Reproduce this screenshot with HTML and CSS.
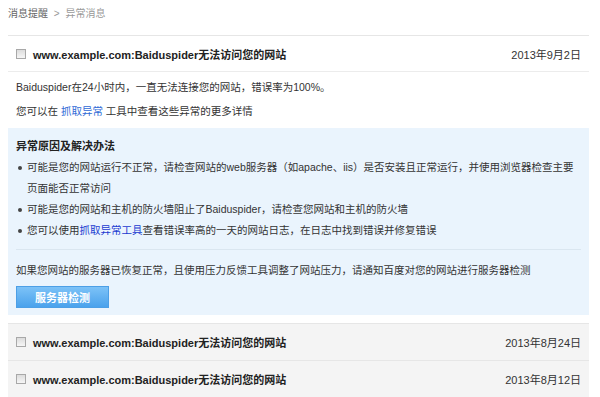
FILE: index.html
```html
<!DOCTYPE html>
<html lang="zh-CN">

<head>
    <meta charset="UTF-8">
    <title>异常消息</title>
    <link rel="stylesheet" href="styles.css">
</head>

<body>
    <div class="page">
        <div class="crumbs">
            <span class="crumb-parent">消息提醒</span>
            <span class="crumb-sep">&gt;</span>
            <span class="crumb-current">异常消息</span>
        </div>

        <!-- 展开的消息 -->
        <div class="msg msg-open">
            <div class="msg-head">
                <span class="check"></span>
                <span class="msg-title">www.example.com:Baiduspider无法访问您的网站</span>
                <span class="msg-date">2013年9月2日</span>
            </div>
            <div class="msg-body">
                <p>Baiduspider在24小时内，一直无法连接您的网站，错误率为100%。</p>
                <p>您可以在 <a href="#" class="link">抓取异常</a> 工具中查看这些异常的更多详情</p>
            </div>
            <div class="solution">
                <h3 class="solution-title">异常原因及解决办法</h3>
                <ul class="solution-list">
                    <li>可能是您的网站运行不正常，请检查网站的web服务器（如apache、iis）是否安装且正常运行，并使用浏览器检查主要页面能否正常访问</li>
                    <li>可能是您的网站和主机的防火墙阻止了Baiduspider，请检查您网站和主机的防火墙</li>
                    <li>您可以使用<a href="#" class="link-dark">抓取异常工具</a>查看错误率高的一天的网站日志，在日志中找到错误并修复错误</li>
                </ul>
                <p class="solution-note">如果您网站的服务器已恢复正常，且使用压力反馈工具调整了网站压力，请通知百度对您的网站进行服务器检测</p>
                <button class="check-btn">服务器检测</button>
            </div>
        </div>

        <!-- 折叠的消息 -->
        <div class="msg msg-closed">
            <div class="msg-head">
                <span class="check"></span>
                <span class="msg-title">www.example.com:Baiduspider无法访问您的网站</span>
                <span class="msg-date">2013年8月24日</span>
            </div>
        </div>
        <div class="msg msg-closed">
            <div class="msg-head">
                <span class="check"></span>
                <span class="msg-title">www.example.com:Baiduspider无法访问您的网站</span>
                <span class="msg-date">2013年8月12日</span>
            </div>
        </div>
    </div>
</body>

</html>
```

FILE: styles.css
```css
* {
    margin: 0;
    padding: 0;
    box-sizing: border-box;
}

body {
    font-family: "Liberation Sans", "Noto Sans CJK SC", sans-serif;
    font-size: 10.5px;
    color: #333;
    background: #fff;
}

.page {
    width: 581px;
    margin-left: 8px;
}

.crumbs {
    height: 35px;
    padding-top: 7px;
    font-size: 10px;
    line-height: 14px;
    color: #666;
}

.crumb-sep,
.crumb-current {
    color: #999;
}

.crumb-sep {
    margin: 0 3px;
}

.msg-head {
    display: flex;
    align-items: center;
    height: 37px;
    padding: 0 8px;
    border-top: 1px solid #e6e6e6;
}

.msg-open .msg-head {
    border-bottom: 1px solid #ececec;
}

.check {
    width: 10px;
    height: 10px;
    border: 1px solid #a8a8a8;
    background: linear-gradient(#dcdcdc, #f6f6f6);
    margin-right: 7px;
}

.msg-title {
    font-size: 11px;
    font-weight: bold;
    color: #222;
}

.msg-date {
    margin-left: auto;
    font-size: 11px;
    color: #333;
}

.msg-body {
    padding: 3px 8px 5px;
    line-height: 24px;
}

.link {
    color: #2f6ad6;
    text-decoration: none;
}

.link-dark {
    color: #1a3ad0;
    text-decoration: none;
}

.solution {
    background: #eaf4fd;
    padding: 8px 8px 7px;
}

.solution-title {
    font-size: 11px;
    line-height: 20px;
    color: #222;
}

.solution-list {
    list-style: none;
    margin-top: 1px;
    padding-bottom: 8px;
    border-bottom: 1px solid #dae6f0;
    line-height: 21px;
}

.solution-list li {
    position: relative;
    padding-left: 11px;
}

.solution-list li::before {
    content: "";
    position: absolute;
    left: 2px;
    top: 9px;
    width: 4px;
    height: 4px;
    border-radius: 50%;
    background: #444;
}

.solution-note {
    margin-top: 10px;
    line-height: 20px;
}

.check-btn {
    display: block;
    margin-top: 6px;
    width: 93px;
    height: 22px;
    border: 1px solid #4c9fe6;
    background: linear-gradient(#7cc2f7, #4aa2ec);
    color: #fff;
    font-family: inherit;
    font-size: 11px;
    font-weight: bold;
}

.msg-closed {
    background: #f4f4f4;
}

.solution + .msg-closed,
.msg-open + .msg-closed {
    margin-top: 8px;
}
```
